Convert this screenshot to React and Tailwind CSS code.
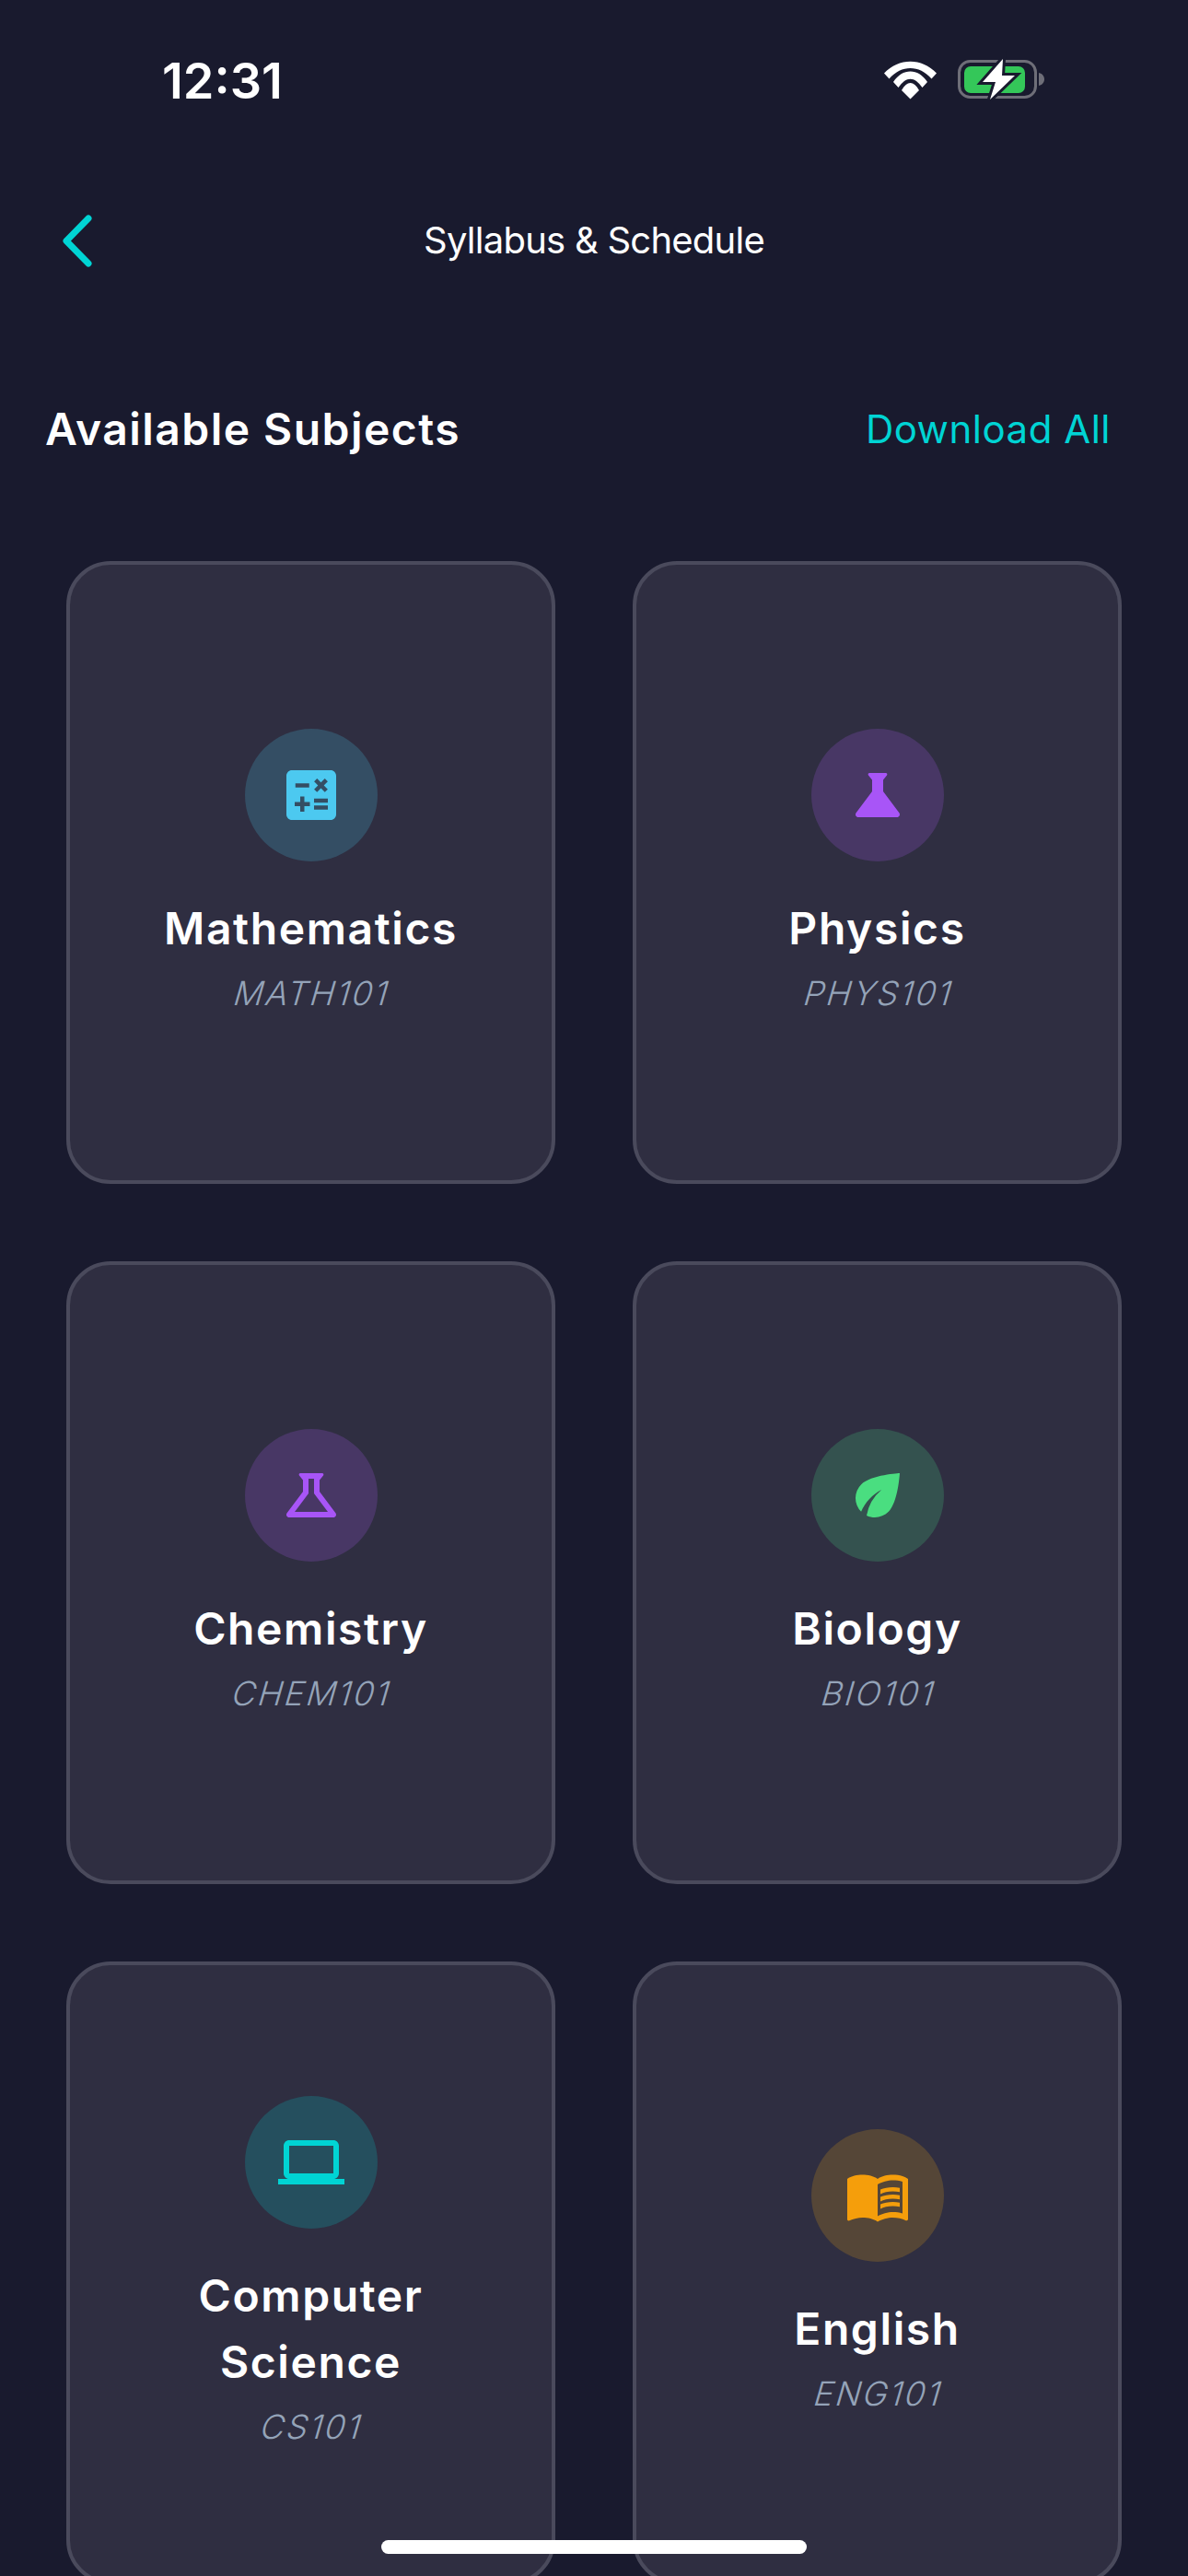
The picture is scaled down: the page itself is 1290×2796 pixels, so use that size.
import { MdCalculate, MdScience, MdOutlineScience, MdEco, MdLaptop, MdMenuBook } from 'react-icons/md';

const subjects = [
  { name: 'Mathematics', code: 'MATH101', Icon: MdCalculate, circle: 'bg-[#344e64]', color: 'text-[#4cc9f0]' },
  { name: 'Physics', code: 'PHYS101', Icon: MdScience, circle: 'bg-[#483765]', color: 'text-[#a855f7]' },
  { name: 'Chemistry', code: 'CHEM101', Icon: MdOutlineScience, circle: 'bg-[#483765]', color: 'text-[#a855f7]' },
  { name: 'Biology', code: 'BIO101', Icon: MdEco, circle: 'bg-[#34524f]', color: 'text-[#4ade80]' },
  { name: 'Computer Science', code: 'CS101', Icon: MdLaptop, circle: 'bg-[#254f5e]', color: 'text-[#00d4d4]' },
  { name: 'English', code: 'ENG101', Icon: MdMenuBook, circle: 'bg-[#554637]', color: 'text-[#f59e0b]' },
];

const StatusIcons = () => (
  <svg className="overflow-visible" width="175" height="44" viewBox="0 0 175 44" fill="none">
    <path fill="#fff" d="M0 14.500 C16 -2.600 41 -2.600 57 14.500 L51.500 20.500 C38 5.200 19 5.200 5.500 20.500Z" />
    <path fill="#fff" d="M10 24 C20 8.700 37 8.700 47 24 L41.500 30 C33 17.500 24 17.500 15.500 30Z" />
    <path fill="#fff" d="M19 33 C25 22.300 32 22.300 38 33 L28.500 42.500Z" />
    <rect x="81.500" y="1.500" width="83" height="39" rx="12" stroke="#6e6e78" strokeWidth="3" />
    <path fill="#6e6e78" d="M168 14 C172 15 174 18 174 21 C174 24 172 27 168 28Z" />
    <rect x="87" y="7" width="66" height="29" rx="7" fill="#34c759" />
    <path fill="#fff" stroke="#191a2e" strokeWidth="6" paintOrder="stroke" d="M129 -1 L107 24 H121 L115 43 L142 17 H128Z" />
  </svg>
);

const SubjectCard = ({ name, code, Icon, circle, color }) => (
  <div className="h-[676px] rounded-[48px] border-[4.5px] border-[#4a4a5c] bg-[#2f2e41] px-[66px] pt-[2px] flex flex-col items-center justify-center">
    <div className={`w-[144px] h-[144px] rounded-full flex items-center justify-center ${circle}`}>
      <Icon size={72} className={color} />
    </div>
    <div className="mt-[37px] text-[48px] leading-[72px] font-semibold tracking-[1.6px] text-white text-center">{name}</div>
    <div className="mt-[7px] ml-[4px] text-[36px] leading-[54px] font-light skew-x-[-16deg] tracking-[2.2px] text-[#94a3b8]">{code}</div>
  </div>
);

export default function App() {
  return (
    <div className="relative w-[1290px] h-[2796px] overflow-hidden bg-[#191a2e] font-['Inter',sans-serif]">
      <div className="h-[175px] pl-[176px] pr-[155px] pt-[54px] flex items-start justify-between">
        <span className="text-[54px] leading-[68px] font-semibold text-white">12:31</span>
        <div className="pt-[11px]"><StatusIcons /></div>
      </div>

      <div className="relative h-[172px] flex items-start justify-center">
        <svg className="absolute left-[64px] top-[55px]" width="40" height="62" viewBox="0 0 40 62" fill="none">
          <path d="M32 7 L8 31.500 L32 56" stroke="#00d4d4" strokeWidth="7" strokeLinecap="round" strokeLinejoin="round" />
        </svg>
        <h1 className="mt-[58px] text-[40px] leading-[56px] font-normal tracking-[-0.76px] text-white">Syllabus &amp; Schedule</h1>
      </div>

      <div className="h-[122px] pl-[49px] pr-[84px] flex items-start justify-between">
        <h2 className="mt-[90px] text-[48px] leading-[58px] font-semibold tracking-[1.44px] text-white">Available Subjects</h2>
        <button className="mt-[90px] text-[42px] leading-[58px] tracking-[0.5px] text-[#00d4d4]">Download All</button>
      </div>

      <div className="mt-[140px] px-[72px] grid grid-cols-2 gap-[84px]">
        {subjects.map((s) => <SubjectCard key={s.code} {...s} />)}
      </div>

      <div className="absolute left-[414px] top-[2757px] w-[462px] h-[15px] rounded-full bg-white" />
    </div>
  );
}
